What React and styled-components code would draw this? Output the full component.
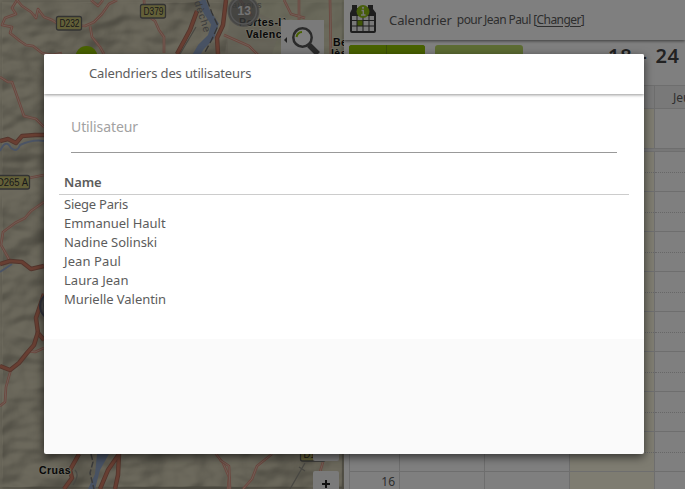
import React from "react";
import styled, { createGlobalStyle } from "styled-components";

const GlobalStyle = createGlobalStyle`
  * { box-sizing: border-box; }
  html, body { margin: 0; overflow: hidden; }
  body { font-family: "Noto Sans", sans-serif; font-size: 13px; color: #5c5c5c; }
`;

const Page = styled.div`
  display: flex;
  width: 685px;
  height: 489px;
  overflow: hidden;
  background: #fff;
`;

const MapPane = styled.div`
  position: relative;
  flex: 0 0 344px;
  overflow: hidden;
`;

const MapSvg = styled.svg`
  display: block;
`;

const SearchButton = styled.div`
  position: absolute;
  left: 281px;
  top: 20px;
  width: 43px;
  height: 43px;
  background: #f4f4f4;
`;

const ZoomButton = styled.div`
  position: absolute;
  left: 313px;
  top: ${(p) => p.$top}px;
  width: 26px;
  height: 26px;
  border-radius: 2px;
  background: #f5f5f5;
  display: flex;
  align-items: center;
  justify-content: center;
`;

const Panel = styled.div`
  flex: 0 0 341px;
  display: flex;
  flex-direction: column;
  overflow: hidden;
  background: #fff;
`;

const PanelHeader = styled.div`
  flex: 0 0 40px;
  display: flex;
  padding-left: 5px;
  box-shadow: 0 1px 3px rgba(0, 0, 0, 0.55);
  white-space: nowrap;
`;

const PanelTitle = styled.span`
  font-size: 13px;
  line-height: 18px;
  letter-spacing: -0.08px;
  margin: 11px 0 0 12px;
`;

const PanelUser = styled.span`
  font-size: 12px;
  line-height: 18px;
  letter-spacing: -0.58px;
  margin: 11px 0 0 5px;
  u { text-underline-offset: 2px; }
`;

const Toolbar = styled.div`
  flex: 0 0 45px;
  display: flex;
  align-items: flex-start;
  padding: 5px 0 0 5px;
  white-space: nowrap;
`;

const NavButtons = styled.div`
  display: grid;
  flex-shrink: 0;
  grid-template-columns: 37px 38px;
  gap: 1px;
  width: 76px;
  height: 30px;
  border-radius: 3px;
  overflow: hidden;
  background: #789f14;
`;

const NavButton = styled.div`
  background: #92c400;
`;

const TodayButton = styled.div`
  flex-shrink: 0;
  width: 88px;
  height: 30px;
  margin-left: 10px;
  border-radius: 3px;
  background: #bbd867;
`;

const WeekTitle = styled.div`
  flex-shrink: 0;
  margin: -3px 0 0 85px;
  font-size: 20px;
  line-height: 28px;
  font-weight: 600;
  letter-spacing: 0.7px;
  word-spacing: 2.1px;
  color: #444;
`;

const Week = styled.div`
  margin-left: 5px;
  border-left: 1px solid #dcdcdc;
  border-top: 1px solid #dcdcdc;
`;

const WeekRow = styled.div`
  display: grid;
  grid-template-columns: 50px 85px 85px 85px 85px;
  height: ${(p) => p.$height}px;
  background: ${(p) => p.$bg || "#fff"};
  border-bottom: ${(p) => (p.$rule ? "1px solid #dcdcdc" : "none")};
`;

const Cell = styled.div`
  border-right: 1px solid #dcdcdc;
  background: ${(p) => (p.$today ? "#fcf8e3" : "transparent")};
`;

const DayName = styled(Cell)`
  font-size: 12px;
  line-height: 23px;
  padding-left: 18px;
`;

const HourCell = styled(Cell)`
  border-bottom: 1px solid #dcdcdc;
  &::before {
    content: "";
    display: block;
    height: 20px;
    border-bottom: 1px dotted #cfcfcf;
  }
`;

const HourLabel = styled(Cell)`
  border-bottom: 1px solid #dcdcdc;
  font-size: 12px;
  line-height: 19px;
  text-align: right;
  padding-right: 4px;
`;

const Separator = styled.div`
  height: 3px;
  background: #eee;
  border-bottom: 1px solid #dcdcdc;
`;

const Backdrop = styled.div`
  position: absolute;
  left: 0;
  top: 0;
  width: 685px;
  height: 489px;
  background: rgba(0, 0, 0, 0.5);
  display: flex;
  align-items: flex-start;
  justify-content: flex-start;
  padding: 54px 0 0 44px;
`;

const Dialog = styled.div`
  width: 600px;
  height: 400px;
  border-radius: 2px;
  overflow: hidden;
  background: #fafafa;
  box-shadow: 0 3px 10px rgba(0, 0, 0, 0.6);
`;

const DialogHeader = styled.div`
  position: relative;
  height: 40px;
  padding-left: 45px;
  line-height: 39px;
  letter-spacing: -0.14px;
  background: #fff;
  box-shadow: 0 1px 3px rgba(0, 0, 0, 0.42);
`;

const DialogBody = styled.div`
  height: 245px;
  padding: 20px 15px 0;
  background: #fff;
`;

const Field = styled.div`
  height: 39px;
  margin: 0 12px;
  border-bottom: 1px solid #999;
  font-size: 14px;
  line-height: 26px;
  letter-spacing: -0.1px;
  color: #a2a2a2;
`;

const ListHeader = styled.div`
  height: 42px;
  padding: 19px 5px 0;
  line-height: 20px;
  font-weight: 600;
  letter-spacing: -0.1px;
  border-bottom: 1px solid #ccc;
`;

const ListRow = styled.div`
  height: 19px;
  padding-left: 5px;
  line-height: 19px;
  letter-spacing: ${(p) => p.$track}px;
`;

const users = [
  { name: "Siege Paris", track: -0.25 },
  { name: "Emmanuel Hault", track: -0.03 },
  { name: "Nadine Solinski", track: -0.03 },
  { name: "Jean Paul", track: 0.1 },
  { name: "Laura Jean", track: 0.04 },
  { name: "Murielle Valentin", track: -0.05 },
];
const hours = ["", "9", "10", "11", "12", "13", "14", "15", "16"];

const minorRoads = [
  "M17 0 L12 8 L16 14 L5 18 L2 25 L12 27 L10 33 L20 41 L26 45 L33 46 L42 53 L52 55 L62 53",
  "M17 0 L22 6 L31 12 L36 18 L38 9 L44 17 L52 20 L58 24 L85 26 L94 22 L102 14 L109 4 L117 0",
  "M90 26 L92 37 L100 47 L104 54",
  "M91 0 L98 6 L103 0",
  "M144 0 L145 14 L155 21 L159 30 L164 37 L164 53",
  "M299 0 L299 28 M240 0 L252 16 M224 35 L249 46 L263 60 M330 0 L331 60 M284 0 L291 14 L305 18",
  "M0 77 L8 82 L12 82 L17 96 L24 116 L36 119 L44 127",
  "M29 178 L44 175",
  "M44 202 L31 211 L25 218 L15 223 L3 232 L1 245 L10 261",
  "M44 348 L35 352 L28 351",
  "M11 369 L6 387 L5 402 L0 406",
  "M216 454 L223 463 L229 477 L228 489",
  "M272 454 L257 466 L252 479 L243 489",
  "M220 460 L229 466 L230 489 M323 462 L320 472",
];

const majorRoads = [
  "M0 141 L8 139 L16 143 L22 136 L35 135 L44 135",
  "M0 264 L10 261 L22 262 L31 269 L44 266",
  "M44 294 L36 318 L38 333 L44 340",
  "M38 332 L34 345 L27 353 L19 363 L10 370 L0 366",
  "M226 0 L223 25 L217 38 L218 54",
  "M197 11 L190 30 L177 54",
  "M79 454 L70 470 L72 478 L64 489",
  "M119 454 L108 470 L100 489 M119 454 L118 475 L115 489",
];

const roadSigns = [
  { label: "D232", x: 56.5, y: 16.5, width: 25, textX: 59.5, length: 20 },
  { label: "D379", x: 140.5, y: 4.5, width: 25, textX: 143.5, length: 20 },
  { label: "D265 A", x: -8, y: 175.5, width: 37.5, textX: -3, length: 31 },
  { label: "D1", x: 300.5, y: 447.5, width: 25, textX: 303.5, length: 12 },
];

function MapView() {
  return (
    <MapSvg width="344" height="489" viewBox="0 0 344 489">
      <defs>
        <filter id="relief" x="0" y="0" width="100%" height="100%" colorInterpolationFilters="sRGB">
          <feTurbulence type="fractalNoise" baseFrequency="0.02 0.03" numOctaves="3" seed="8" />
          <feColorMatrix values="0 0 0 0 0  0 0 0 0 0  0 0 0 0 0  1.2 0 0 0 -0.1" />
          <feGaussianBlur stdDeviation="1" />
          <feDiffuseLighting surfaceScale="12" diffuseConstant="1.25" lightingColor="#d2ccb5">
            <feDistantLight azimuth="225" elevation="54" />
          </feDiffuseLighting>
        </filter>
      </defs>
      <rect width="344" height="489" fill="#cbc5ad" />
      <rect width="344" height="489" filter="url(#relief)" opacity="0.25" />
      <path d="M228 0 H344 V60 H228z" fill="#d4d5b6" opacity=".55" />
      <path d="M230 18 L252 10 L282 24 L270 60 L224 60z" fill="#c9c3b0" opacity=".6" />
      <path d="M0 151 Q6 138 11 148 Q17 153 20 145 Q33 139 44 141" fill="none" stroke="#97a8c9" strokeWidth="2" />
      <path d="M0 272 L12 264" stroke="#97a8c9" strokeWidth="2" />
      <path d="M202 0 L207 12 L215 24 L211 37 L201 47 L195 57" fill="none" stroke="#91a5c7" strokeWidth="7" />
      <path d="M207 0 L212 13 L218 26 L211 41 L204 54" fill="none" stroke="#676767" strokeWidth="1.3" strokeDasharray="7 3" />
      <path d="M97 454 L109 454 L100 470 L95 489 H88 L95 474z" fill="#91a5c7" />
      <path d="M91 454 L93 462 L90 473 L94 489" fill="none" stroke="#777" strokeWidth="1.5" strokeDasharray="6 2" />
      <path d="M305 463 L290 489 M299 467 l6 4 M196 27 L180 54 M75 470 Q80 475 73 485" stroke="#908e84" strokeWidth="1.3" fill="none" />
      {minorRoads.map((d) => (
        <g key={d} fill="none" strokeLinejoin="round">
          <path d={d} stroke="#d78d7c" strokeWidth="2.6" />
          <path d={d} stroke="#e0bbab" strokeWidth="1" />
        </g>
      ))}
      {majorRoads.map((d) => (
        <g key={d} fill="none" strokeLinejoin="round">
          <path d={d} stroke="#a76a59" strokeWidth="4.5" />
          <path d={d} stroke="#d07d65" strokeWidth="2.7" />
        </g>
      ))}
      <g fontFamily="Liberation Sans, sans-serif" fontSize="10" fill="#333">
        {roadSigns.map((s) => (
          <g key={s.label}>
            <rect x={s.x} y={s.y} width={s.width} height="13.5" rx="2" fill="#c7c071" stroke="#666" strokeWidth="1.3" />
            <text x={s.textX} y={s.y + 10.5} textLength={s.length} lengthAdjust="spacingAndGlyphs">{s.label}</text>
          </g>
        ))}
      </g>
      <circle cx="86.5" cy="57" r="11" fill="#92c400" />
      <text x="194" y="2" transform="rotate(72 194 2)" fontFamily="Liberation Sans, sans-serif" fontSize="10.5" letterSpacing="1" fill="#787878">dèche</text>
      <text x="232" y="8" fontFamily="Liberation Sans, sans-serif" fontSize="9" letterSpacing=".4" fill="#777">aurens</text>
      <g fontFamily="Liberation Sans, sans-serif" fontWeight="bold" fontSize="10.5" fill="#111" letterSpacing=".45" stroke="#dedbc7" strokeWidth="1.5" paintOrder="stroke">
        <text x="239" y="26">Portes-lès-</text>
        <text x="246" y="38">Valence</text>
        <text x="333" y="46">Be</text>
        <text x="331" y="57">lès</text>
        <text x="39" y="474">Cruas</text>
      </g>
      <circle cx="243.5" cy="11" r="15" fill="#737373" fillOpacity=".75" stroke="#8c8c8c" strokeOpacity=".7" strokeWidth="2" />
      <circle cx="243.5" cy="11" r="13" fill="none" stroke="#ababab" strokeWidth="1.5" />
      <text x="244.3" y="14.8" textAnchor="middle" fontFamily="Liberation Sans, sans-serif" fontWeight="bold" fontSize="12" fill="#e6e6e6">13</text>
      <circle cx="54" cy="306" r="14" fill="#838383" stroke="#5e6374" strokeWidth="2" />
      <circle cx="54" cy="306" r="11.5" fill="none" stroke="#9c9c9c" />
    </MapSvg>
  );
}

function SearchIcon() {
  return (
    <svg width="43" height="43" viewBox="0 0 43 43">
      <path d="M6 17 L3 20 L6 23z" fill="#444" />
      <path d="M28 25 L37 34" stroke="#555" strokeWidth="5.5" />
      <circle cx="21.5" cy="17.5" r="9.2" fill="#fff" stroke="#555" strokeWidth="2.5" />
      <path d="M15.5 17 A6 6 0 0 1 21 12" fill="none" stroke="#92c400" strokeWidth="2" />
    </svg>
  );
}

function CalendarIcon() {
  return (
    <svg width="28" height="40" viewBox="0 0 28 40">
      <path d="M3 5 H8 V8 H19 V5 H24 V9 L27 13 V31 Q27 33 25 33 H3 Q1 33 1 31 V13 L3 9z" fill="#3c3c3c" />
      <path d="M3 16h4.5v4H3z M8.5 16h5v4h-5z M14.5 16h5v4h-5z M20.5 16H25v4h-4.5z M3 21h4.5v4.5H3z M14.5 21h5v4.5h-5z M20.5 21H25v4.5h-4.5z M3 26.5h4.5V31H3z M8.5 26.5h5V31h-5z M14.5 26.5h5V31h-5z M20.5 26.5H25V31h-4.5z" fill="#f2f2f2" />
      <path d="M8.5 20.5 h5 v5 h-5z" fill="#82ac10" />
      <circle cx="14" cy="11.5" r="6.5" fill="#8fbd14" />
      <path d="M12.5 10.5 H14.3 V15 M12 15h4.5" fill="none" stroke="#eee" strokeWidth="1.4" />
      <circle cx="14" cy="7.8" r="1.1" fill="#eee" />
    </svg>
  );
}

export default function App() {
  return (
    <>
      <GlobalStyle />
      <Page>
        <MapPane>
          <MapView />
          <SearchButton><SearchIcon /></SearchButton>
          <ZoomButton $top={435} />
          <ZoomButton $top={471}>
            <svg width="10" height="10" viewBox="0 0 10 10"><path d="M5 1v8M1 5h8" stroke="#222" strokeWidth="2" /></svg>
          </ZoomButton>
        </MapPane>
        <Panel>
          <PanelHeader>
            <CalendarIcon />
            <PanelTitle>Calendrier</PanelTitle>
            <PanelUser>pour Jean Paul [<u>Changer</u>]</PanelUser>
          </PanelHeader>
          <Toolbar>
            <NavButtons><NavButton /><NavButton /></NavButtons>
            <TodayButton />
            <WeekTitle>18 - 24 juil.</WeekTitle>
          </Toolbar>
          <Week>
            <WeekRow $height={23} $rule $bg="#f3f3f3">
              <Cell /><Cell /><Cell /><Cell /><DayName>Jeu</DayName>
            </WeekRow>
            <WeekRow $height={40} $rule>
              <Cell /><Cell /><Cell /><Cell $today /><Cell />
            </WeekRow>
            <Separator />
            {hours.map((hour) => (
              <WeekRow key={hour} $height={40}>
                <HourLabel>{hour}</HourLabel>
                <HourCell /><HourCell /><HourCell $today /><HourCell />
              </WeekRow>
            ))}
          </Week>
        </Panel>
      </Page>
      <Backdrop>
        <Dialog role="dialog">
          <DialogHeader>Calendriers des utilisateurs</DialogHeader>
          <DialogBody>
            <Field>Utilisateur</Field>
            <ListHeader>Name</ListHeader>
            {users.map((user) => (
              <ListRow key={user.name} $track={user.track}>{user.name}</ListRow>
            ))}
          </DialogBody>
        </Dialog>
      </Backdrop>
    </>
  );
}
